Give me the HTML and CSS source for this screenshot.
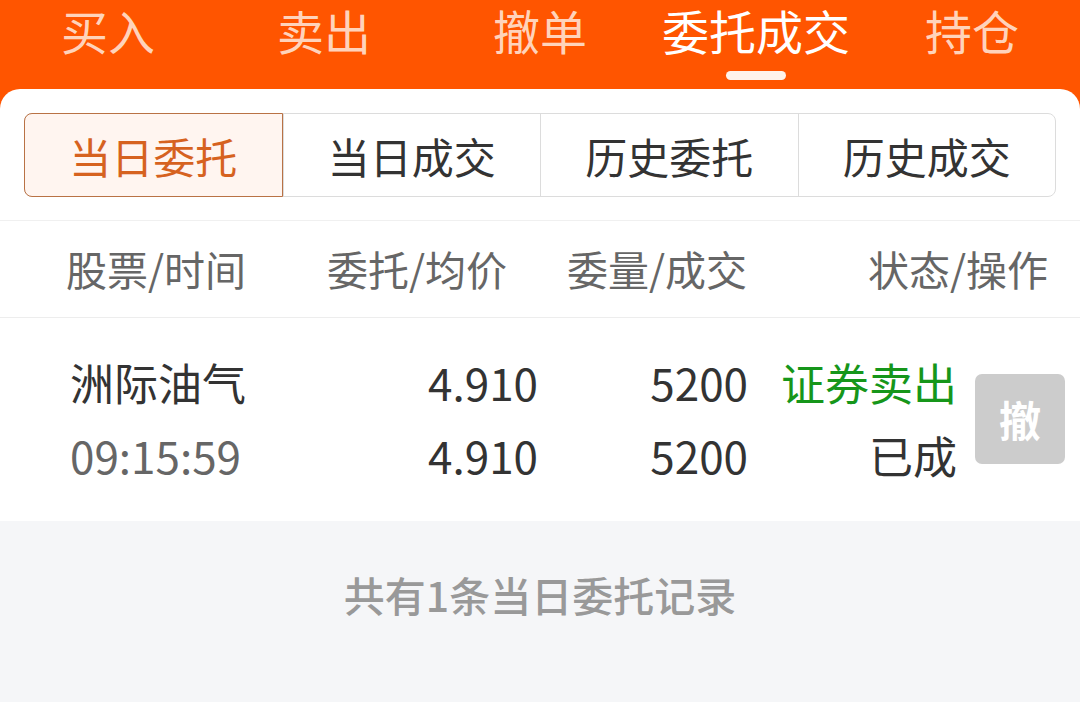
FILE: index.html
```html
<!DOCTYPE html>
<html lang="zh-CN">
<head>
<meta charset="utf-8">
<title>委托成交</title>
<link rel="stylesheet" href="styles.css">
</head>
<body>
<div class="app">
  <nav class="topbar">
    <div class="tab"><span class="tab-label">买入</span></div>
    <div class="tab"><span class="tab-label">卖出</span></div>
    <div class="tab"><span class="tab-label">撤单</span></div>
    <div class="tab active"><span class="tab-label">委托成交</span><span class="indicator"></span></div>
    <div class="tab"><span class="tab-label">持仓</span></div>
  </nav>
  <main class="card">
    <div class="seg-wrap">
      <div class="segments">
        <div class="seg active">当日委托</div>
        <div class="seg">当日成交</div>
        <div class="seg">历史委托</div>
        <div class="seg">历史成交</div>
      </div>
    </div>
    <div class="thead">
      <div class="th">股票/时间</div>
      <div class="th">委托/均价</div>
      <div class="th">委量/成交</div>
      <div class="th th-right">状态/操作</div>
    </div>
    <div class="trow">
      <div class="cell left">
        <div class="line name">洲际油气</div>
        <div class="line time">09:15:59</div>
      </div>
      <div class="cell num">
        <div class="line">4.910</div>
        <div class="line">4.910</div>
      </div>
      <div class="cell num">
        <div class="line">5200</div>
        <div class="line">5200</div>
      </div>
      <div class="cell num">
        <div class="line sell">证券卖出</div>
        <div class="line">已成</div>
      </div>
      <div class="cell action">
        <button class="cancel-btn">撤</button>
      </div>
    </div>
    <div class="footer">共有1条当日委托记录</div>
  </main>
</div>
</body>
</html>
```

FILE: styles.css
```css
* {
  box-sizing: border-box;
}

html, body {
  margin: 0;
  padding: 0;
}

body {
  width: 1080px;
  height: 702px;
  overflow: hidden;
  background: #f5f6f8;
  font-family: "Noto Sans CJK SC", "Noto Sans", sans-serif;
}

.app {
  background: #ff5500;
  height: 702px;
  display: flex;
  flex-direction: column;
}

.topbar {
  display: grid;
  grid-template-columns: repeat(5, 1fr);
  height: 89px;
  background: #ff5500;
}

.tab {
  display: flex;
  flex-direction: column;
  align-items: center;
}

.tab-label {
  display: block;
  font-size: 47px;
  line-height: 60px;
  color: #ffd3bb;
  white-space: nowrap;
}

.tab.active .tab-label {
  color: #ffffff;
}

.indicator {
  display: block;
  width: 60px;
  height: 9px;
  margin-top: 11px;
  border-radius: 5px;
  background: #fff3ea;
}

.card {
  flex: 1;
  background: #ffffff;
  border-radius: 20px 20px 0 0;
  display: flex;
  flex-direction: column;
  overflow: hidden;
}

.seg-wrap {
  padding: 24px 24px 23px;
  border-bottom: 1px solid #f0f0f0;
}

.segments {
  display: grid;
  grid-template-columns: repeat(4, 1fr);
  height: 84px;
  border: 1px solid #dcdcdc;
  border-radius: 8px;
}

.seg {
  display: flex;
  align-items: center;
  justify-content: center;
  font-size: 42px;
  color: #333333;
  border-left: 1px solid #dcdcdc;
}

.seg:first-child {
  border-left: none;
}

.seg.active {
  margin: -1px 0 -1px -1px;
  background: #fff5f0;
  color: #d6621f;
  border: 1px solid #b97245;
  border-radius: 8px 0 0 8px;
}

.thead {
  display: grid;
  grid-template-columns: 261px 240px 1fr auto;
  align-items: center;
  height: 97px;
  padding: 0 32px 2px 66px;
  border-bottom: 1px solid #ededed;
}

.th {
  font-size: 41px;
  color: #666666;
  white-space: nowrap;
}

.th-right {
  text-align: right;
}

.trow {
  display: grid;
  grid-template-columns: 230px 238px 210px 209px 108px;
  padding: 28px 15px 29px 70px;
  align-items: center;
}

.cell {
  display: flex;
  flex-direction: column;
}

.cell.num {
  text-align: right;
}

.cell.action {
  margin-left: 18px;
  width: 90px;
  justify-self: end;
}

.line {
  font-size: 44px;
  line-height: 73px;
  color: #333333;
  white-space: nowrap;
}

.line.time {
  color: #666666;
}

.line.sell {
  color: #16961a;
}

.cancel-btn {
  width: 90px;
  height: 90px;
  margin-top: -1px;
  border: none;
  border-radius: 7px;
  background: #cccccc;
  color: #ffffff;
  font-family: "Noto Sans CJK SC", sans-serif;
  font-size: 42px;
  font-weight: 700;
  padding: 0;
}

.footer {
  flex: 1;
  background: #f5f6f8;
  text-align: center;
  font-size: 41px;
  font-weight: 500;
  line-height: 44px;
  padding-top: 51px;
  color: #999999;
}
```
